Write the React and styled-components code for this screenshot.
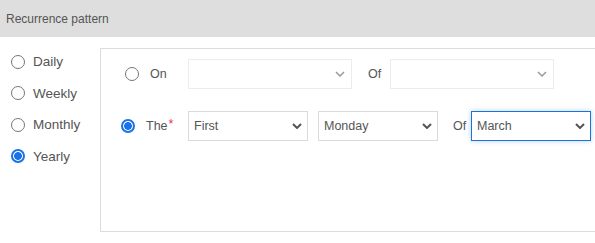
import React from 'react';
import styled, { createGlobalStyle, css } from 'styled-components';

const GlobalStyle = createGlobalStyle`
  html, body {
    margin: 0;
    padding: 0;
    background: #fff;
    overflow: hidden;
  }

  body {
    font-family: "Liberation Sans", Arial, sans-serif;
    color: #555;
  }
`

const Page = styled.div`
  width: 595px;
  height: 243px;
  overflow: hidden;
`

const Header = styled.div`
  height: 37px;
  display: flex;
  align-items: center;
  padding-left: 6px;
  background: #dedede;
  font-size: 12px;
  color: #555;
`

const Body = styled.div`
  display: flex;
  align-items: flex-start;
  padding-top: 9px;
`

const PatternList = styled.div`
  width: 100px;
  flex-shrink: 0;
  display: flex;
  flex-direction: column;
  padding-left: 11px;
  box-sizing: border-box;
`

const PatternItem = styled.label`
  height: 31.5px;
  display: flex;
  align-items: center;
  gap: 8px;
  font-size: 13.5px;
  color: #555;
`

const Radio = styled.span`
  width: ${({ size }) => size}px;
  height: ${({ size }) => size}px;
  box-sizing: border-box;
  border-radius: 50%;
  flex-shrink: 0;
  border: 1px solid #767676;
  background: #fff;

  ${({ checked }) => checked && css`
    border: 2px solid #1a73e8;
    background: radial-gradient(circle, #1a73e8 0 3.6px, #fff 4.1px);
  `}
`

const Panel = styled.div`
  flex: 1;
  margin-top: 2px;
  margin-right: -10px;
  height: 184px;
  box-sizing: border-box;
  border: 1px solid #dcdcdc;
  padding-top: 10px;
  display: flex;
  flex-direction: column;
  gap: 22px;
`

const Row = styled.div`
  display: flex;
  align-items: center;
  height: 30px;
`

const Lead = styled.label`
  width: 87px;
  flex-shrink: 0;
  display: flex;
  align-items: center;
  box-sizing: border-box;
  padding-left: ${({ indent }) => indent}px;
  font-size: 12.5px;
  color: #555;
`

const LeadText = styled.span`
  margin-left: 11px;
`

const Required = styled.span`
  color: #e8305a;
  margin-left: 1px;
  position: relative;
  top: -2px;
`

const OfLabel = styled.span`
  font-size: 12.5px;
  color: #555;
  margin-left: ${({ before }) => before}px;
  width: ${({ width }) => width}px;
  flex-shrink: 0;
`

const SelectBox = styled.div`
  position: relative;
  width: ${({ width }) => width}px;
  height: 30px;
  flex-shrink: 0;
  margin-right: ${({ after = 0 }) => after}px;
`

const NativeSelect = styled.select`
  appearance: none;
  width: 100%;
  height: 100%;
  box-sizing: border-box;
  margin: 0;
  padding: 0 20px 0 5px;
  border: 1px solid ${({ disabled }) => disabled ? '#e4e4e4' : '#dadada'};
  border-radius: 0;
  background: #fff;
  font-family: "Liberation Sans", Arial, sans-serif;
  font-size: 12.5px;
  color: #555;
  outline: none;

  ${({ focused }) => focused && css`
    border: 1px solid #1b73d3;
    box-shadow: 0 0 5px rgba(40, 130, 230, 0.35);
  `}
`

const Chevron = styled.svg`
  position: absolute;
  right: ${({ disabled }) => disabled ? 7 : 6}px;
  top: 50%;
  margin-top: -3px;
  pointer-events: none;
`

const Select = ({ width, value, disabled, focused, after, options = [] }) => (
  <SelectBox width={width} after={after}>
    <NativeSelect value={value} disabled={disabled} focused={focused} onChange={() => {}}>
      {[value, ...options].map(o => <option key={o} value={o}>{o}</option>)}
    </NativeSelect>
    <Chevron disabled={disabled} width="10" height="6" viewBox="0 0 10 6">
      <path
        d="M1 1 L5 5 L9 1"
        fill="none"
        stroke={disabled ? '#9a9a9a' : '#555'}
        strokeWidth={disabled ? 1.5 : 2}
      />
    </Chevron>
  </SelectBox>
)

const patterns = ['Daily', 'Weekly', 'Monthly', 'Yearly']

export default function App() {
  return (
    <Page>
      <GlobalStyle />
      <Header>Recurrence pattern</Header>
      <Body>
        <PatternList>
          {patterns.map(p => (
            <PatternItem key={p}>
              <Radio size={14} checked={p === 'Yearly'} />
              {p}
            </PatternItem>
          ))}
        </PatternList>
        <Panel>
          <Row>
            <Lead indent={24}>
              <Radio size={14} />
              <LeadText>On</LeadText>
            </Lead>
            <Select width={164} value="" disabled />
            <OfLabel before={16} width={22}>Of</OfLabel>
            <Select width={164} value="" disabled />
          </Row>
          <Row>
            <Lead indent={20}>
              <Radio size={14} checked />
              <LeadText>The<Required>*</Required></LeadText>
            </Lead>
            <Select width={120} value="First" after={10} options={['Second', 'Third', 'Fourth', 'Last']} />
            <Select width={120} value="Monday" options={['Tuesday', 'Wednesday', 'Thursday', 'Friday']} />
            <OfLabel before={15} width={18}>Of</OfLabel>
            <Select width={120} value="March" focused options={['January', 'February', 'April']} />
          </Row>
        </Panel>
      </Body>
    </Page>
  )
}
